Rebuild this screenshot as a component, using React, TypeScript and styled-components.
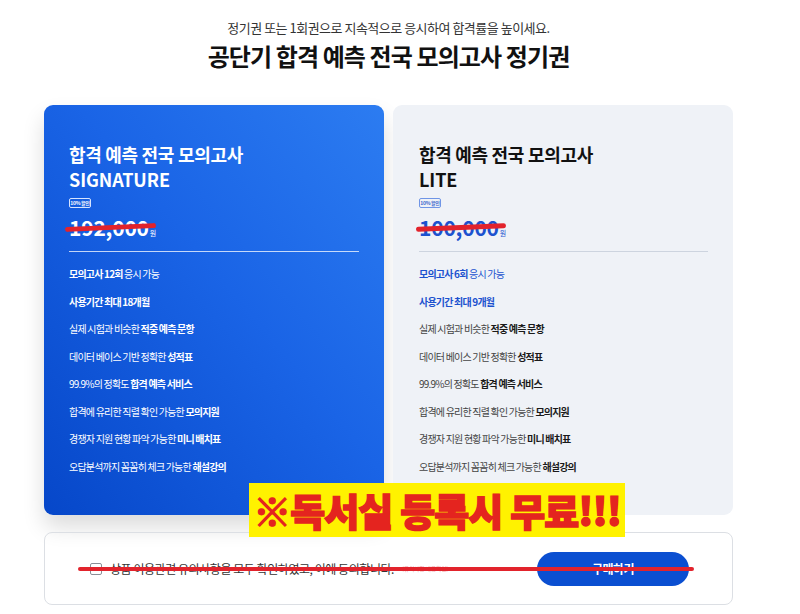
import styled, { createGlobalStyle, css } from "styled-components";

const GlobalStyle = createGlobalStyle`
  html, body { margin: 0; padding: 0; background: #ffffff; }
  body { font-family: "Noto Sans CJK KR", "Noto Sans", sans-serif; color: #222; }
`;

const Page = styled.div`
  width: 689px;
  margin-left: 44px;
  padding-top: 18px;
`;

const Header = styled.header`
  display: flex;
  flex-direction: column;
  align-items: center;
`;

const SubTitle = styled.p`
  margin: 0;
  font-size: 13px;
  line-height: 20px;
  letter-spacing: -0.5px;
  color: #333;
`;

const Title = styled.h1`
  margin: 2px 0 0;
  font-size: 24px;
  line-height: 32px;
  font-weight: 700;
  letter-spacing: -0.9px;
  color: #111;
`;

const Body = styled.div`
  position: relative;
  margin-top: 33px;
`;

const Cards = styled.div`
  display: grid;
  grid-template-columns: 340px 340px;
  gap: 9px;
`;

const Card = styled.section<{ $dark?: boolean }>`
  height: 410px;
  box-sizing: border-box;
  padding: 37px 25px 0 25px;
  border-radius: 9px;
  ${(p) =>
    p.$dark
      ? css`
          background: linear-gradient(to top right, #0647c9 0%, #1a64e6 55%, #2c7cf1 100%);
          color: #fff;
          box-shadow: 0 12px 22px rgba(0, 0, 0, 0.14);
        `
      : css`
          background: #eff2f7;
          color: #111;
          padding-left: 26px;
        `}
`;

const CardTitle = styled.h2`
  margin: 0;
  font-size: 18px;
  line-height: 25px;
  font-weight: 700;
  letter-spacing: -0.3px;
`;

const Latin = styled.span`
  letter-spacing: -0.1px;
`;

const Badge = styled.div<{ $dark?: boolean }>`
  display: flex;
  align-items: center;
  justify-content: center;
  margin-top: 6px;
  width: 22px;
  height: 10px;
  box-sizing: border-box;
  border: 1px solid ${(p) => (p.$dark ? "#d7e4ff" : "#6f95e6")};
  border-radius: 2px;
  font-size: 5px;
  line-height: 8px;
  font-weight: 700;
  letter-spacing: -0.3px;
  color: ${(p) => (p.$dark ? "#fff" : "#3a66cc")};
  white-space: nowrap;
  overflow: hidden;
`;

const PriceRow = styled.div<{ $dark?: boolean }>`
  position: relative;
  display: flex;
  align-items: baseline;
  margin-top: 6px;
  height: 26px;
  color: ${(p) => (p.$dark ? "#fff" : "#1c52cf")};
`;

const Price = styled.span`
  font-size: 21px;
  line-height: 26px;
  font-weight: 700;
  letter-spacing: -0.2px;
`;

const Won = styled.span`
  margin-left: 1px;
  font-size: 7px;
  color: inherit;
`;

const Strike = styled.span<{ $left: number; $width: number; $angle: number }>`
  position: absolute;
  left: ${(p) => p.$left}px;
  top: 11px;
  width: ${(p) => p.$width}px;
  height: 5px;
  border-radius: 3px;
  background: #e2232c;
  transform: rotate(${(p) => p.$angle}deg);
`;

const Divider = styled.hr<{ $dark?: boolean }>`
  margin: 11px 0 0;
  border: 0;
  height: 1px;
  background: ${(p) => (p.$dark ? "rgba(255,255,255,0.75)" : "#cdd4df")};
`;

const Features = styled.ul`
  margin: 8px 0 0;
  padding: 0;
  list-style: none;
`;

const Feature = styled.li<{ $dark?: boolean; $accent?: boolean }>`
  font-size: 10px;
  line-height: 27.5px;
  letter-spacing: -0.8px;
  color: ${(p) => (p.$dark ? "#fff" : p.$accent ? "#1c52cf" : "#444")};
  b {
    font-weight: 700;
    color: ${(p) => (p.$dark ? "#fff" : p.$accent ? "#1c52cf" : "#1a1a1a")};
  }
`;

const Agree = styled.div`
  position: relative;
  margin-top: 17px;
  height: 73px;
  box-sizing: border-box;
  border: 1px solid #dcdfe4;
  border-radius: 8px;
  display: flex;
  align-items: center;
  justify-content: space-between;
  padding: 0 43px 0 45px;
`;

const AgreeLabel = styled.label`
  display: flex;
  align-items: center;
  gap: 6px;
  font-size: 12px;
  letter-spacing: -0.45px;
  color: #333;
`;

const Check = styled.span`
  width: 10px;
  height: 10px;
  border: 1px solid #8a8f98;
  border-radius: 2px;
  background: #fff;
  margin-right: 2px;
`;

const Note = styled.span`
  margin-left: 2px;
  font-size: 6px;
  letter-spacing: -0.3px;
  color: #f2a2a6;
`;

const BuyButton = styled.button`
  width: 152px;
  height: 34px;
  border: 0;
  border-radius: 17px;
  background: #0b4fd1;
  color: #fff;
  font-family: inherit;
  font-size: 12px;
  font-weight: 700;
  letter-spacing: -0.5px;
`;

const LongStrike = styled.span`
  position: absolute;
  left: 33px;
  top: 34px;
  width: 616px;
  height: 4px;
  border-radius: 2px;
  background: #e2232c;
`;

const Banner = styled.div`
  position: absolute;
  left: 205px;
  top: 378px;
  width: 376px;
  height: 54px;
  background: #fff200;
  display: flex;
  align-items: center;
  justify-content: center;
`;

const BannerText = styled.span`
  font-size: 38px;
  line-height: 44px;
  font-weight: 900;
  letter-spacing: -0.9px;
  color: #e4241f;
  -webkit-text-stroke: 1.5px #e4241f;
  white-space: nowrap;
`;

type Item = { text: string; bold: string; boldFirst?: boolean; accent?: boolean };

const common: Item[] = [
  { text: "실제 시험과 비슷한 ", bold: "적중 예측 문항" },
  { text: "데이터 베이스 기반 정확한 ", bold: "성적표" },
  { text: "99.9%의 정확도 ", bold: "합격 예측 서비스" },
  { text: "합격에 유리한 직렬 확인 가능한 ", bold: "모의지원" },
  { text: "경쟁자 지원 현황 파악 가능한 ", bold: "미니 배치표" },
  { text: "오답분석까지 꼼꼼히 체크 가능한 ", bold: "해설강의" },
];

const plans = [
  {
    name: "SIGNATURE",
    dark: true,
    price: "192,000",
    strike: { left: -4, width: 91, angle: -2.5 },
    items: [
      { text: " 응시 가능", bold: "모의고사 12회", boldFirst: true, accent: true },
      { text: "", bold: "사용기간 최대 18개월", accent: true },
      ...common,
    ],
  },
  {
    name: "LITE",
    dark: false,
    price: "100,000",
    strike: { left: -3, width: 90, angle: -2.5 },
    items: [
      { text: " 응시 가능", bold: "모의고사 6회", boldFirst: true, accent: true },
      { text: "", bold: "사용기간 최대 9개월", accent: true },
      ...common,
    ],
  },
];

export default function App() {
  return (
    <>
      <GlobalStyle />
      <Page>
        <Header>
          <SubTitle>정기권 또는 1회권으로 지속적으로 응시하여 합격률을 높이세요.</SubTitle>
          <Title>공단기 합격 예측 전국 모의고사 정기권</Title>
        </Header>
        <Body>
          <Cards>
            {plans.map((plan) => (
              <Card key={plan.name} $dark={plan.dark}>
                <CardTitle>
                  합격 예측 전국 모의고사
                  <br />
                  <Latin>{plan.name}</Latin>
                </CardTitle>
                <Badge $dark={plan.dark}>10% 할인</Badge>
                <PriceRow $dark={plan.dark}>
                  <Price>{plan.price}</Price>
                  <Won>원</Won>
                  <Strike $left={plan.strike.left} $width={plan.strike.width} $angle={plan.strike.angle} />
                </PriceRow>
                <Divider $dark={plan.dark} />
                <Features>
                  {plan.items.map((item) => (
                    <Feature key={item.bold} $dark={plan.dark} $accent={item.accent}>
                      {item.boldFirst ? (
                        <>
                          <b>{item.bold}</b>
                          {item.text}
                        </>
                      ) : (
                        <>
                          {item.text}
                          <b>{item.bold}</b>
                        </>
                      )}
                    </Feature>
                  ))}
                </Features>
              </Card>
            ))}
          </Cards>
          <Agree>
            <AgreeLabel>
              <Check />
              상품 이용관련 유의사항을 모두 확인하였고, 이에 동의합니다.
              <Note>(유의사항 내용확인)</Note>
            </AgreeLabel>
            <BuyButton>구매하기</BuyButton>
            <LongStrike />
          </Agree>
          <Banner>
            <BannerText>※독서실 등록시 무료!!!</BannerText>
          </Banner>
        </Body>
      </Page>
    </>
  );
}
